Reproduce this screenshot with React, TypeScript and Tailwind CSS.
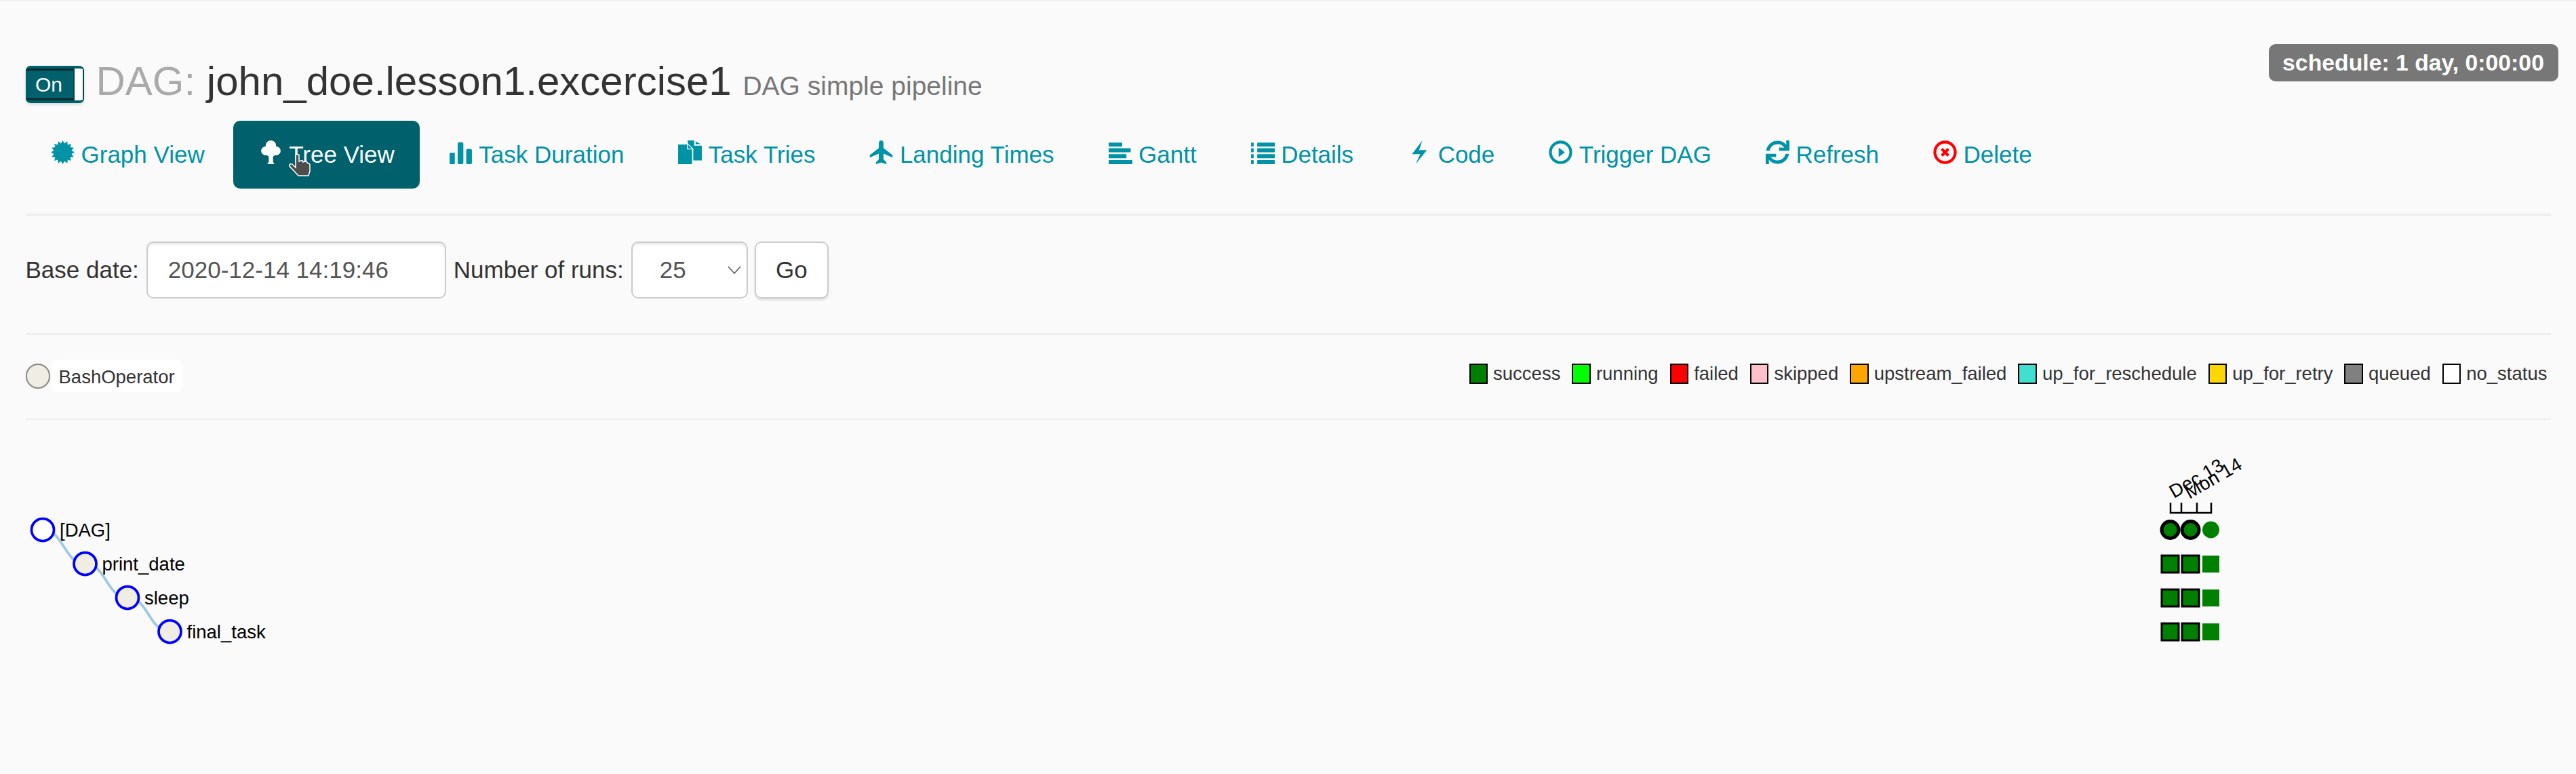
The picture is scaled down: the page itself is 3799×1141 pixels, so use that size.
import type { ReactNode } from 'react'
import { FaSync } from 'react-icons/fa'

// 16 point star used for the graph view icon
const starPoints = Array.from({ length: 32 }, (_, i) => {
  const r = i % 2 === 0 ? 50 : 38
  const a = (i * Math.PI) / 16 - Math.PI / 2
  return `${(50 + r * Math.cos(a)).toFixed(1)},${(50 + r * Math.sin(a)).toFixed(1)}`
}).join(' ')

function Glyph({ children }: { children: ReactNode }) {
  return (
    <svg viewBox="0 0 100 100" className="w-[35px] h-[35px] -mt-[7px] shrink-0" fill="currentColor">
      {children}
    </svg>
  )
}

const rows = [9, 33, 58, 83]

const navItems: { label: string; icon: ReactNode; active?: boolean }[] = [
  { label: 'Graph View', icon: <Glyph><polygon points={starPoints} /></Glyph> },
  {
    label: 'Tree View',
    active: true,
    icon: (
      <Glyph>
        <circle cx="50" cy="22" r="22" />
        <circle cx="28" cy="44" r="19" />
        <circle cx="72" cy="44" r="19" />
        <circle cx="50" cy="50" r="20" />
        <polygon points="41,55 59,55 59,90 65,100 35,100 41,90" />
      </Glyph>
    ),
  },
  {
    label: 'Task Duration',
    icon: (
      <Glyph>
        <rect x="3" y="52" width="22" height="48" rx="3" />
        <rect x="37" y="8" width="24" height="92" rx="6" />
        <rect x="73" y="36" width="24" height="64" rx="6" />
      </Glyph>
    ),
  },
  {
    label: 'Task Tries',
    icon: (
      <Glyph>
        <polygon points="0,17 38,17 38,38 59,38 59,100 0,100" />
        <polygon points="42,18 59,34 42,34" />
        <polygon points="40,0 68,0 68,22 100,22 100,84 64,84 64,34 42,14" />
        <polygon points="74,4 96,16 74,16" />
      </Glyph>
    ),
  },
  {
    label: 'Landing Times',
    icon: (
      <Glyph>
        <path d="M50,0 C57,0 60,6 60,14 V32 L98,62 V72 L60,56 V80 L72,92 V100 L50,93 L28,100 V92 L40,80 V56 L2,72 V62 L40,32 V14 C40,6 43,0 50,0 Z" />
      </Glyph>
    ),
  },
  {
    label: 'Gantt',
    icon: (
      <Glyph>
        {[57, 93, 75, 100].map((w, i) => (
          <rect key={i} x="0" y={rows[i]} width={w} height="17" rx="2" />
        ))}
      </Glyph>
    ),
  },
  {
    label: 'Details',
    icon: (
      <Glyph>
        {rows.map((y) => (
          <g key={y}>
            <rect x="0" y={y} width="11" height="17" rx="2" />
            <rect x="26" y={y} width="74" height="17" rx="2" />
          </g>
        ))}
      </Glyph>
    ),
  },
  {
    label: 'Code',
    icon: <Glyph><polygon points="62,0 18,58 53,58 33,100 81,41 48,41" /></Glyph>,
  },
  {
    label: 'Trigger DAG',
    icon: (
      <Glyph>
        <circle cx="50" cy="50" r="43" fill="none" stroke="currentColor" strokeWidth="12" />
        <polygon points="42,30 68,50 42,70" />
      </Glyph>
    ),
  },
  {
    label: 'Refresh',
    icon: <FaSync className="w-[35px] h-[35px] -mt-[7px] shrink-0" />,
  },
  {
    label: 'Delete',
    icon: (
      <span className="text-[#ff0000] flex">
        <Glyph>
          <circle cx="50" cy="50" r="43" fill="none" stroke="currentColor" strokeWidth="12" />
          <path d="M36,36 L64,64 M64,36 L36,64" stroke="currentColor" strokeWidth="12" />
        </Glyph>
      </span>
    ),
  },
]

const legend = [
  { label: 'success', color: 'bg-[#008000]' },
  { label: 'running', color: 'bg-[#00ff00]' },
  { label: 'failed', color: 'bg-[#ff0000]' },
  { label: 'skipped', color: 'bg-[#ffc0cb]' },
  { label: 'upstream_failed', color: 'bg-[#ffa500]' },
  { label: 'up_for_reschedule', color: 'bg-[#40e0d0]' },
  { label: 'up_for_retry', color: 'bg-[#ffd700]' },
  { label: 'queued', color: 'bg-[#808080]' },
  { label: 'no_status', color: 'bg-white' },
]

const nodes = [
  { x: 63, y: 782, label: '[DAG]', fill: '#ffffff' },
  { x: 125.5, y: 832, label: 'print_date', fill: '#f0ede4' },
  { x: 188, y: 882, label: 'sleep', fill: '#f0ede4' },
  { x: 250.5, y: 932, label: 'final_task', fill: '#f0ede4' },
]

function Divider() {
  return <div className="h-[2.5px] bg-[#eeeeee]" />
}

function HandCursor() {
  return (
    <svg viewBox="0 0 34 34" className="absolute left-[80px] top-[48px] w-[34px] h-[34px]">
      <path
        d="M12,3 C12,1 17,1 17,3 V12 L20,11 C22,10 23,11 23,13 L26,12 C28,12 29,13 29,14 L31,15 C33,15 33,17 33,18 V26 L31,33 H16 L3,19 C2,16 5,15 7,16 L12,21 Z"
        fill="#4d4d4d"
        stroke="#ffffff"
        strokeWidth="1.5"
      />
    </svg>
  )
}

function TreeChart() {
  return (
    <svg viewBox="0 620 3799 521" className="block w-[3799px] h-[521px] -ml-[37.5px] font-['Liberation_Sans',sans-serif]">
      {nodes.slice(1).map((n, i) => {
        const p = nodes[i]
        const mid = (p.x + n.x) / 2
        return (
          <path
            key={n.label}
            d={`M${p.x},${p.y} C${mid},${p.y} ${mid},${n.y} ${n.x},${n.y}`}
            fill="none"
            stroke="#9ecae1"
            strokeWidth="3.75"
          />
        )
      })}
      {nodes.map((n) => (
        <g key={n.label}>
          <circle cx={n.x} cy={n.y} r="16.5" fill={n.fill} stroke="#0000ff" strokeWidth="3.75" />
          <text x={n.x + 25} y={n.y + 9.6} fontSize="27.5" fill="#000000">{n.label}</text>
        </g>
      ))}

      {/* time axis */}
      <path d="M3201,742 V757 H3261 V742 M3217,742 V757 M3240,742 V757" fill="none" stroke="#000000" strokeWidth="2.5" />
      <text transform="translate(3206,736) rotate(-30)" fontSize="27.5" fill="#000000">Dec 13</text>
      <text transform="translate(3229,737) rotate(-30)" fontSize="27.5" fill="#000000">Mon 14</text>

      {/* status grid */}
      <circle cx="3200.5" cy="782" r="12.5" fill="#008000" stroke="#000000" strokeWidth="5" />
      <circle cx="3230.5" cy="782" r="12.5" fill="#008000" stroke="#000000" strokeWidth="5" />
      <circle cx="3260.5" cy="782" r="12.5" fill="#008000" />
      {[820, 870, 920].map((y) => (
        <g key={y}>
          <rect x="3188" y={y} width="25" height="25" fill="#008000" stroke="#000000" strokeWidth="3" />
          <rect x="3218" y={y} width="25" height="25" fill="#008000" stroke="#000000" strokeWidth="3" />
          <rect x="3248" y={y} width="25" height="25" fill="#008000" />
        </g>
      ))}
    </svg>
  )
}

export default function App() {
  return (
    <div className="min-h-[1141px] w-full overflow-hidden bg-[#fafafa] px-[37.5px] font-['Liberation_Sans',sans-serif] text-[35px] text-[#333333]">
      <div className="h-[3px] -mx-[37.5px] bg-gradient-to-b from-[#eeeeee] to-[#fafafa]" />

      {/* header */}
      <div className="flex justify-between items-start pt-[62px]">
        <div className="flex items-start mt-[22px]">
          <div className="relative mt-[10px] mr-[18px] h-[55px] w-[86px] rounded-[7px] bg-[#00606b] border-y-[4px] border-[#00606b] shadow-[0_2px_4px_rgba(0,0,0,0.15)] overflow-hidden">
            <div className="absolute inset-x-0 top-0 h-[3px] bg-[#00272c]" />
            <div className="absolute inset-x-0 bottom-0 h-[3px] bg-[#00272c]" />
            <div className="absolute left-0 w-[69px] inset-y-0 flex items-center justify-center text-[30px] text-white">On</div>
            <div className="absolute right-0 -inset-y-[4px] w-[16px] rounded-[6px] bg-white border-[2.5px] border-[#00474f]" />
          </div>
          <h3 className="text-[60px] leading-[66px] font-normal whitespace-pre">
            <span className="text-[#aaaaaa]">DAG: </span>john_doe.lesson1.excercise1{' '}
            <small className="text-[39px] leading-none text-[#777777]">DAG simple pipeline</small>
          </h3>
        </div>
        <span className="-mr-[11px] flex h-[55px] w-[427px] items-center justify-center rounded-[10px] bg-[#777777] text-[33.75px] font-bold text-white">
          schedule: 1 day, 0:00:00
        </span>
      </div>

      {/* nav pills */}
      <div className="flex gap-[5px] mt-[25px] text-[#0093a5]">
        {navItems.map((item) => (
          <a
            key={item.label}
            className={`relative flex items-center gap-[9.5px] px-[37.5px] py-[25px] leading-[50px] rounded-[10px] whitespace-nowrap ${
              item.active ? 'bg-[#00606b] text-white' : ''
            }`}
          >
            {item.icon}
            {item.label}
            {item.active && <HandCursor />}
          </a>
        ))}
      </div>

      <div className="mt-[37px]">
        <Divider />
      </div>

      {/* date form */}
      <form className="flex items-center mt-[38.5px]">
        <label className="mr-[11px]">Base date:</label>
        <input
          readOnly
          value="2020-12-14 14:19:46"
          className="h-[84px] w-[442px] rounded-[10px] border-[2.5px] border-[#cccccc] bg-white px-[30px] text-[#555555] shadow-[inset_0_3px_3px_rgba(0,0,0,0.08)] outline-none"
        />
        <label className="mx-[11px]">Number of runs:</label>
        <div className="relative">
          <select
            defaultValue="25"
            className="block h-[84px] w-[172px] appearance-none rounded-[10px] border-[2.5px] border-[#cccccc] bg-white pl-[40px] text-[#555555] shadow-[inset_0_3px_3px_rgba(0,0,0,0.08)] outline-none"
          >
            <option value="25">25</option>
          </select>
          <svg viewBox="0 0 20 12" className="absolute right-[10px] top-[36px] w-[20px] h-[12px]" fill="none" stroke="#555555" strokeWidth="1.5">
            <path d="M1,1 L10,11 L19,1" />
          </svg>
        </div>
        <button
          type="button"
          className="ml-[10px] h-[84px] w-[109px] rounded-[10px] border-[2.5px] border-[#cccccc] bg-white text-[#333333] shadow-[0_3px_3px_rgba(0,0,0,0.1)]"
        >
          Go
        </button>
      </form>

      <div className="mt-[51px]">
        <Divider />
      </div>

      {/* operators and state legend */}
      <div className="flex justify-between items-start h-[123px] pt-[36.5px] text-[27.5px]">
        <div className="flex items-center gap-[2px] h-[48px]">
          <span className="h-[37px] w-[36px] rounded-full border-[2.5px] border-[#888888] bg-[#f0ede4]" />
          <span className="flex h-[48px] items-center rounded-[10px] bg-white px-[11px] pt-[3px]">BashOperator</span>
        </div>
        <div className="flex gap-[17px] pr-[5px] pt-[6px]">
          {legend.map((item) => (
            <div key={item.label} className="flex items-center gap-[8px] h-[30px]">
              <span className={`h-[30px] w-[27.5px] border-[2.5px] border-black ${item.color}`} />
              {item.label}
            </div>
          ))}
        </div>
      </div>

      <Divider />

      <TreeChart />
    </div>
  )
}
